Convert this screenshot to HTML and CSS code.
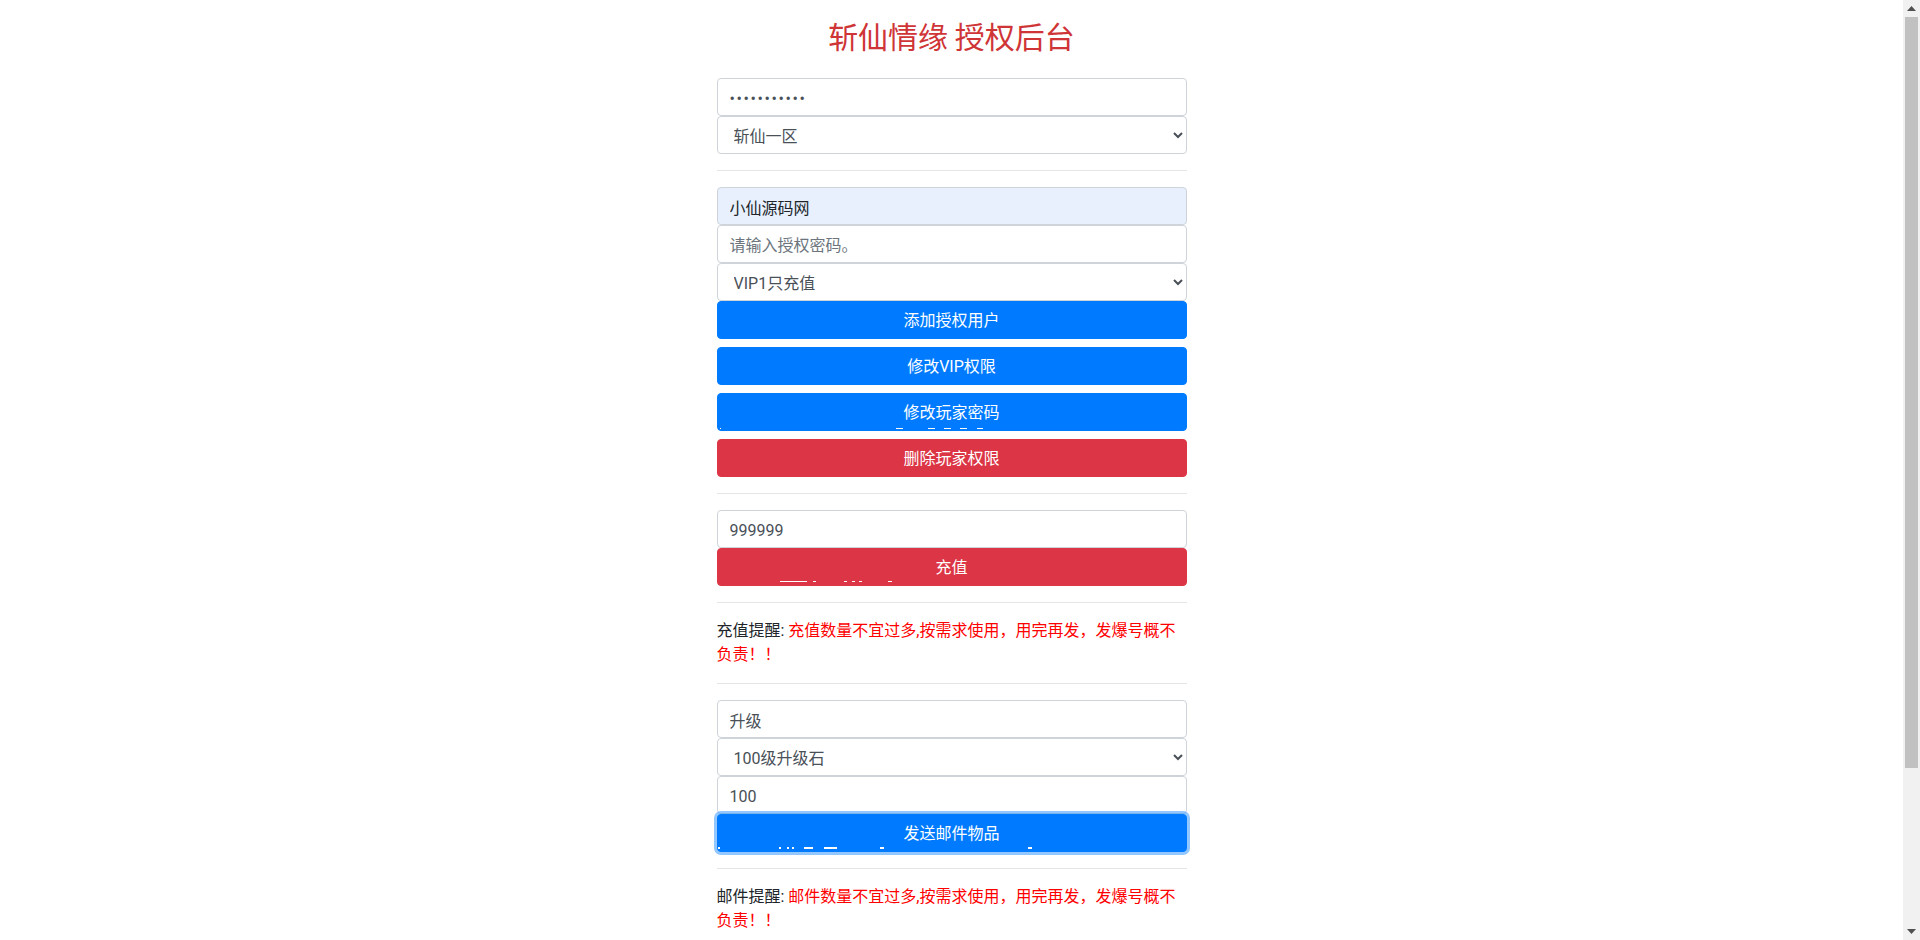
FILE: index.html
```html
<!DOCTYPE html>
<html lang="zh-CN">
<head>
<meta charset="utf-8">
<title>斩仙情缘 授权后台</title>
<link rel="stylesheet" href="styles.css">
</head>
<body>
<div class="page">
  <h1 class="title">斩仙情缘 授权后台</h1>
  <form class="panel" onsubmit="return false">
    <input class="field field-secret" type="password" value="12345678901">
    <select class="field"><option>斩仙一区</option></select>

    <hr class="rule">

    <input class="field field-autofill" type="text" value="小仙源码网">
    <input class="field" type="password" placeholder="请输入授权密码。">
    <select class="field"><option>VIP1只充值</option></select>
    <button class="btn btn-primary" type="button">添加授权用户</button>
    <button class="btn btn-primary btn-spaced" type="button">修改VIP权限</button>
    <button class="btn btn-primary btn-spaced glitch glitch-a" type="button">修改玩家密码</button>
    <button class="btn btn-danger btn-spaced" type="button">删除玩家权限</button>

    <hr class="rule">

    <input class="field" type="text" value="999999">
    <button class="btn btn-danger glitch glitch-b" type="button">充值</button>

    <hr class="rule">

    <p class="notice">充值提醒: <span class="notice-warn">充值数量不宜过多,按需求使用，用完再发，发爆号概不负责！！</span></p>

    <hr class="rule">

    <input class="field" type="text" value="升级">
    <select class="field"><option>100级升级石</option></select>
    <input class="field" type="text" value="100">
    <button class="btn btn-primary btn-focus glitch glitch-c" type="button">发送邮件物品</button>

    <hr class="rule">

    <p class="notice">邮件提醒: <span class="notice-warn">邮件数量不宜过多,按需求使用，用完再发，发爆号概不负责！！</span></p>
  </form>
</div>

<div class="scrollbar" aria-hidden="true">
  <div class="scrollbar-arrow">
    <svg width="9" height="5" viewBox="0 0 9 5"><path d="M0 5 L4.5 0 L9 5 Z" fill="#505050"/></svg>
  </div>
  <div class="scrollbar-track">
    <div class="scrollbar-thumb"></div>
  </div>
  <div class="scrollbar-arrow">
    <svg width="9" height="5" viewBox="0 0 9 5"><path d="M0 0 L4.5 5 L9 0 Z" fill="#505050"/></svg>
  </div>
</div>
</body>
</html>
```

FILE: styles.css
```css
* {
  box-sizing: border-box;
}

html {
  background: #fff;
}

body {
  margin: 0 17px 0 0;
  font-family: "Segoe UI", Roboto, "Noto Sans CJK SC", sans-serif;
  font-size: 16px;
  line-height: 1.5;
  color: #212529;
  background: #fff;
}

.page {
  width: 470px;
  margin: 0 auto;
  padding: 17px 0 180px;
}

.title {
  margin: 0 0 25px;
  font-family: "Noto Sans CJK SC", sans-serif;
  font-size: 30px;
  font-weight: 400;
  line-height: 36px;
  text-align: center;
  color: #cf3436;
}

.panel {
  display: flex;
  flex-direction: column;
  margin: 0;
}

.field {
  display: block;
  width: 100%;
  height: 38px;
  padding: 7px 12px 5px;
  margin: 0;
  font-family: inherit;
  font-size: 16px;
  line-height: 1.5;
  color: #495057;
  background: #fff;
  border: 1px solid #ced4da;
  border-radius: 4px;
  outline: none;
}

.field::placeholder {
  color: #6c757d;
  opacity: 1;
}

.field-secret {
  letter-spacing: 1.6px;
}

.field-autofill {
  background: #e8f0fe;
  color: #212529;
}

.rule {
  width: 100%;
  margin: 16px 0;
  border: 0;
  border-top: 1px solid rgba(0, 0, 0, 0.1);
  height: 0;
}

.btn {
  display: block;
  width: 100%;
  height: 38px;
  padding: 7px 12px 5px;
  margin: 0;
  font-family: inherit;
  font-size: 16px;
  line-height: 1.5;
  color: #fff;
  text-align: center;
  border: 1px solid transparent;
  border-radius: 4px;
  cursor: pointer;
  outline: none;
}

.btn-spaced {
  margin-top: 8px;
}

.btn-primary {
  background: #007bff;
  border-color: #007bff;
}

.btn-danger {
  background: #dc3545;
  border-color: #dc3545;
}

.btn-focus {
  box-shadow: 0 0 0 3px rgba(38, 143, 255, 0.5);
}

.glitch {
  position: relative;
}

.glitch::after {
  content: "";
  position: absolute;
  left: 0;
  width: 100%;
  pointer-events: none;
}

.glitch-a::after {
  top: 34px;
  height: 1px;
  background: linear-gradient(to right,
    transparent 2px, #fff 2px 3px,
    transparent 3px 178px, #fff 178px 185px,
    transparent 185px 210px, #fff 210px 217px,
    transparent 217px 226px, #fff 226px 233px,
    transparent 233px 242px, #fff 242px 249px,
    transparent 249px 259px, #fff 259px 265px,
    transparent 265px);
}

.glitch-b::after {
  top: 32px;
  height: 1px;
  background: linear-gradient(to right,
    transparent 62px, #fff 62px 89px,
    transparent 89px 95px, #fff 95px 98px,
    transparent 98px 126px, #fff 126px 129px,
    transparent 129px 134px, #fff 134px 137px,
    transparent 137px 141px, #fff 141px 144px,
    transparent 144px 170px, #fff 170px 174px,
    transparent 174px);
}

.glitch-c::after {
  top: 32px;
  height: 2px;
  background: linear-gradient(to right,
    #fff 0 2px,
    transparent 2px 61px, #fff 61px 63px,
    transparent 63px 69px, #fff 69px 71px,
    transparent 71px 74px, #fff 74px 76px,
    transparent 76px 86px, #fff 86px 95px,
    transparent 95px 106px, #fff 106px 119px,
    transparent 119px 162px, #fff 162px 166px,
    transparent 166px 310px, #fff 310px 314px,
    transparent 314px);
}

.notice {
  margin: 0;
  color: #212529;
}

.notice-warn {
  color: #f00;
}

.scrollbar {
  position: fixed;
  top: 0;
  right: 0;
  width: 17px;
  height: 100vh;
  display: flex;
  flex-direction: column;
  background: #f1f1f1;
}

.scrollbar-arrow {
  height: 17px;
  display: flex;
  align-items: center;
  justify-content: center;
}

.scrollbar-track {
  flex: 1;
  display: flex;
  flex-direction: column;
  padding: 0 2px;
}

.scrollbar-thumb {
  height: 751px;
  background: #c1c1c1;
}
```
